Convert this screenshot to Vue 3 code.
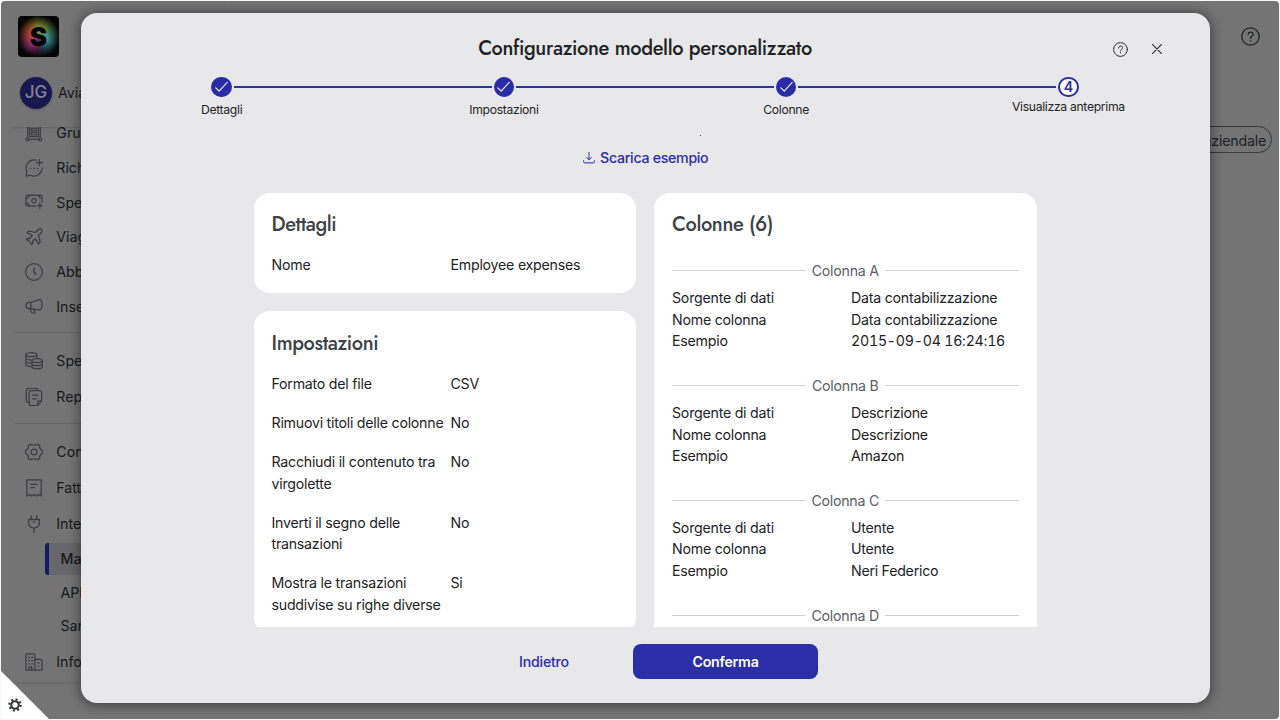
<script setup>
import { ref } from 'vue'

// sidebar icons, drawn on a 20x20 grid
const icons = {
  group: '<path d="M5 1h10v13H5zM7 5h6v2.500H7zM7 9.500h6V12H7zM3 1v14M17 1v14M4.500 17h11"/><circle cx="3" cy="17" r="1.700"/><circle cx="17" cy="17" r="1.700"/>',
  request: '<path d="M12 1.300A9 9 0 0 0 2 13.800L1.200 19l5-1A9 9 0 0 0 19 9.800M16 .500v7M12.500 4h7"/><path d="M6 10.500h.300M10 10.500h.300M14 10.500h.300"/>',
  cash: '<path d="M12 14.500H2.500L1 13V3.500L2.500 2.500h15L19 3.500V10M1 6c2 0 3.500-1 3.500-3.500M19 6c-2 0-3.500-1-3.500-3.500M1 11c2 0 3.500 1 3.500 3.500M16.500 11v6M13.500 14h6"/><circle cx="10" cy="8.500" r="2.400"/>',
  plane: '<path d="M18.400 1.600c-1.500-1-3.200-.200-4.300.900L11.500 5 4.200 3.200 2.300 5.100l5.800 3.300-3.100 3.300-2.300-.300-1.200 1.200 3.500 2.400 2.400 3.500 1.200-1.200-.300-2.300 3.300-3.100 3.300 5.800 1.900-1.900L15 8.500l2.500-2.600c1.100-1.100 1.900-2.800.900-4.300z"/>',
  clock: '<circle cx="10" cy="10" r="9.300"/><path d="M10 5.500V10l2 2.500"/>',
  horn: '<path d="M6.500 6 17 2.500c2.600 2 2.600 9.500 0 12L6.500 13zM6.500 6H3.800C.500 6.500.500 12.500 3.800 13h2.700M5.500 13l2 4.500 3.500.500-1-4"/>',
  coins: '<ellipse cx="7" cy="3" rx="6" ry="2.200"/><path d="M1 3v11c0 1.300 2 2 5 2.200M13 3v3M1 6.700c0 1.200 2 2 5 2.100M1 10.400c0 1.200 2 2 5 2.100"/><ellipse cx="13.500" cy="9.500" rx="5.800" ry="2.200"/><path d="M7.700 9.500v7c0 3 11.600 3 11.600 0v-7M7.700 13c0 3 11.600 3 11.600 0"/>',
  report: '<path d="M4.500 16H3.500a2 2 0 0 1-2-2V2.500a2 2 0 0 1 2-2h9a2 2 0 0 1 2 2"/><path d="M4.500 5a2 2 0 0 1 2-2h10a2 2 0 0 1 2 2v9.500l-4.500 5H6.500a2 2 0 0 1-2-2zM14 19v-4.500h4.500M8.500 8h6M8.500 12h4"/>',
  cog: '<path d="M6 1.500 10 2.500l4-1 2.200 1.300.3 3.200L19.400 8.500v3L16.500 14l-.3 3.200L14 18.500l-4-1-4 1-2.200-1.300L3.500 14 .600 11.500v-3L3.500 6l.3-3.200z"/><circle cx="10" cy="10" r="3.200"/>',
  bill: '<path d="M2 1h16v18l-3-2-2.500 2-2.500-2-2.500 2L5 17l-3 2zM6.500 6h7M6.500 9.500h4"/>',
  plug: '<path d="M7 1v4M13 1v4M4 5h12v4.500c0 3-3 5-6 5s-6-2-6-5zM10 14.500V20M9 8h2"/>',
  building: '<path d="M1 2.500A1.500 1.500 0 0 1 2.500 1h7A1.500 1.500 0 0 1 11 2.500V19H1zM11 7h6.500A1.500 1.500 0 0 1 19 8.500V19h-8M4 5h1M7.500 5h1M4 8.500h1M7.500 8.500h1M4 12h1M7.500 12h1M14.500 11h1M14.500 14.500h1M4.500 19v-3.500h3V19"/>'
}

const menu = ref([
  [
    { icon: 'group', label: 'Gruppi' },
    { icon: 'request', label: 'Richieste' },
    { icon: 'cash', label: 'Spese' },
    { icon: 'plane', label: 'Viaggi' },
    { icon: 'clock', label: 'Abbonamenti' },
    { icon: 'horn', label: 'Inserzioni' }
  ],
  [
    { icon: 'coins', label: 'Spese' },
    { icon: 'report', label: 'Report' }
  ],
  [
    { icon: 'cog', label: 'Controllo' },
    { icon: 'bill', label: 'Fatture' },
    { icon: 'plug', label: 'Integrazioni', children: ['Marketplace', 'API', 'Sandbox'] },
    { icon: 'building', label: 'Informazioni' }
  ]
])

const steps = ['Dettagli', 'Impostazioni', 'Colonne', 'Visualizza anteprima']
const current = 3

const settings = [
  ['Formato del file', 'CSV'],
  ['Rimuovi titoli delle colonne', 'No'],
  ['Racchiudi il contenuto tra virgolette', 'No'],
  ['Inverti il segno delle transazioni', 'No'],
  ['Mostra le transazioni suddivise su righe diverse', 'Si']
]

const columns = [
  { id: 'A', source: 'Data contabilizzazione', example: '2015-09-04 16:24:16' },
  { id: 'B', source: 'Descrizione', example: 'Amazon' },
  { id: 'C', source: 'Utente', example: 'Neri Federico' },
  { id: 'D' }
]
</script>

<template>
  <div class="page">
    <div class="app">
      <aside class="sidebar">
        <div class="brand"><span class="logo">S</span></div>
        <div class="user">
          <span class="avatar">JG</span>
          <span class="company">Aviato</span>
        </div>
        <nav>
          <ul v-for="(group, g) in menu" :key="g" :class="'group-' + g">
            <li v-for="item in group" :key="item.label">
              <div class="item">
                <svg viewBox="0 0 20 20" v-html="icons[item.icon]"></svg>
                <span>{{ item.label }}</span>
              </div>
              <div v-if="item.children" class="children">
                <div v-for="(child, i) in item.children" :key="child" class="child" :class="{ active: i === 0 }">{{ child }}</div>
              </div>
            </li>
          </ul>
        </nav>
      </aside>
      <main>
        <svg class="help-large" viewBox="0 0 20 20">
          <circle cx="10" cy="10" r="9.200" />
          <path d="M7.500 8c0-3.600 5.200-3.500 5.200-.300 0 1.900-2.700 2-2.700 4.300M10 14.300v.400" />
        </svg>
        <button class="pill">Carta aziendale</button>
      </main>
    </div>

    <section class="modal">
      <header>
        <h1>Configurazione modello personalizzato</h1>
        <div class="tools">
          <svg class="help" viewBox="0 0 20 20">
            <circle cx="10" cy="10" r="9.200" />
            <path d="M7.500 8c0-3.600 5.200-3.500 5.200-.300 0 1.900-2.700 2-2.700 4.300M10 14.300v.400" />
          </svg>
          <svg class="close" viewBox="0 0 10 10"><path d="M.400.400l9.200 9.200M9.600.400.400 9.600" /></svg>
        </div>
      </header>

      <ol class="stepper">
        <li v-for="(step, i) in steps" :key="step" :class="{ current: i === current }">
          <span class="dot">
            <svg v-if="i < current" viewBox="0 0 20 20"><path d="M3.300 11.600 7.300 15.400 16.800 5" /></svg>
            <template v-else>{{ i + 1 }}</template>
          </span>
          <span class="step-label">{{ step }}</span>
        </li>
      </ol>

      <div class="content">
        <i class="speck"></i>
        <a class="download">
          <svg viewBox="0 0 12 12"><path d="M6 .500v7.200M3.700 5.500 6 7.800l2.300-2.300M.600 8.700v1.100c0 .700.400 1.100 1.100 1.100h8.600c.700 0 1.100-.400 1.100-1.100V8.700" /></svg>
          Scarica esempio
        </a>
        <div class="cards">
          <div class="stack">
            <article class="card">
              <h2>Dettagli</h2>
              <dl>
                <dt>Nome</dt>
                <dd>Employee expenses</dd>
              </dl>
            </article>
            <article class="card">
              <h2>Impostazioni</h2>
              <dl>
                <template v-for="[name, value] in settings" :key="name">
                  <dt>{{ name }}</dt>
                  <dd>{{ value }}</dd>
                </template>
              </dl>
            </article>
          </div>
          <article class="card">
            <h2>Colonne (6)</h2>
            <div v-for="col in columns" :key="col.id" class="column">
              <h3>Colonna {{ col.id }}</h3>
              <dl v-if="col.source" class="tight">
                <dt>Sorgente di dati</dt>
                <dd>{{ col.source }}</dd>
                <dt>Nome colonna</dt>
                <dd>{{ col.source }}</dd>
                <dt>Esempio</dt>
                <dd class="example">{{ col.example }}</dd>
              </dl>
            </div>
          </article>
        </div>
      </div>

      <footer>
        <button class="back">Indietro</button>
        <button class="confirm">Conferma</button>
      </footer>
    </section>

    <div class="corner">
      <svg viewBox="0 0 16 16">
        <circle cx="8" cy="8" r="4.300" />
        <circle class="teeth" cx="8" cy="8" r="6.500" />
      </svg>
    </div>
  </div>
</template>

<style>
body {
  margin: 0;
  background: #fafafa;
}
</style>

<style scoped>
* {
  box-sizing: border-box;
}
.page {
  position: relative;
  width: 1280px;
  height: 720px;
  padding: 1px;
  overflow: hidden;
  background: #f6f7f7;
  font-family: Inter, sans-serif;
  font-size: 14.2px;
  letter-spacing: -0.24px;
  line-height: 21.3px;
  color: #1d2327;
}
svg {
  fill: none;
  stroke: currentColor;
  stroke-linecap: round;
  stroke-linejoin: round;
  display: block;
  flex: none;
}
ul,
ol,
dl,
dd,
h1,
h2,
h3 {
  margin: 0;
  padding: 0;
  list-style: none;
}
button {
  font: inherit;
  letter-spacing: inherit;
  border: 0;
  background: none;
  padding: 0;
}

/* dimmed app behind the dialog */
.app {
  display: flex;
  height: 718px;
  border-radius: 4px;
  overflow: hidden;
  background: #747474;
}
.sidebar {
  width: 230px;
  height: 681px;
  display: flex;
  flex-direction: column;
  box-shadow: 0 2px 2px rgba(0, 0, 0, 0.08);
  color: #16191c;
  letter-spacing: 0;
}
.brand {
  padding: 15px 17px 0;
}
.logo {
  width: 41px;
  height: 41px;
  display: grid;
  place-items: center;
  border-radius: 4px;
  background:
    radial-gradient(circle at 50% 50%, transparent 30%, #050505 72%),
    conic-gradient(from 0deg, #8a962e, #6c8f3c 35deg, #449070 75deg, #3793a3 120deg, #2a4a60 165deg, #5e2350 185deg, #a8348f 220deg, #b33a48 265deg, #b05e30 315deg, #8a962e);
  color: #000;
  font-size: 26px;
  font-weight: 900;
}
.user {
  display: flex;
  align-items: center;
  gap: 6px;
  height: 70px;
  padding: 2px 0 0 19px;
  flex: none;
}
.avatar {
  width: 32px;
  height: 32px;
  border-radius: 50%;
  display: grid;
  place-items: center;
  background: #16184f;
  color: #858592;
  font-size: 17px;
  font-weight: 500;
  box-shadow: 0 1px 3px rgba(0, 0, 0, 0.2);
}
nav {
  flex: 1;
  overflow: hidden;
  margin-left: 11px;
  padding-left: 3px;
  box-shadow: inset 0 2px 2px -1px rgba(0, 0, 0, 0.15);
}
nav ul {
  padding: 10px 0 8px;
}
nav ul + ul {
  border-top: 1px solid #666;
}
nav .group-0 {
  margin-top: -21.500px;
}
.item {
  display: flex;
  align-items: center;
  gap: 13.300px;
  height: 36px;
  padding-left: 10px;
}
.group-0 .item {
  height: 34.700px;
}
.item svg {
  width: 18px;
  height: 18px;
  stroke-width: 1.400;
  color: #3c3d43;
}
.children {
  padding: 1px 0 0.500px 30px;
}
.child {
  height: 33.700px;
  line-height: 33.700px;
  padding-left: 15.500px;
}
.child.active {
  height: 32px;
  line-height: 32px;
  border-left: 4px solid #171a64;
  border-radius: 3px;
  padding-left: 11.500px;
  background: #67676b;
  margin-bottom: 1px;
  font-weight: 500;
}
main {
  flex: 1;
  display: flex;
  flex-direction: column;
  align-items: flex-end;
  padding: 25.500px 7px 0 0;
  color: #1d2022;
}
.help-large {
  width: 19px;
  height: 19px;
  stroke-width: 1.300;
  margin-right: 12px;
}
.pill {
  margin-top: 80px;
  height: 27.500px;
  padding: 2px 5px 0 14px;
  border: 1px solid #35383a;
  border-radius: 14px;
  font-size: 14.200px;
  letter-spacing: -0.2px;
  color: inherit;
}

/* dialog */
.modal {
  position: absolute;
  left: 80.500px;
  top: 13px;
  width: 1129px;
  height: 689.500px;
  display: flex;
  flex-direction: column;
  border-radius: 16px;
  background: #e8e8ea;
  box-shadow: 0 1px 12px 2px rgba(0, 0, 0, 0.4);
}
.modal > header {
  display: grid;
  grid-template-columns: 1fr auto 1fr;
  align-items: center;
  height: 63.500px;
  padding-top: 9px;
  flex: none;
}
h1,
h2 {
  font-family: Jost, Lato, sans-serif;
  font-weight: 500;
}
h1 {
  grid-column: 2;
  font-size: 20px;
  line-height: 26px;
  letter-spacing: -0.34px;
}
.tools {
  display: flex;
  align-items: center;
  justify-content: flex-end;
  gap: 24px;
  padding-right: 47.500px;
  color: #24292c;
}
.help {
  width: 15px;
  height: 15px;
  stroke-width: 1.300;
}
.close {
  width: 10px;
  height: 10px;
  stroke-width: 1.100;
}
.stepper {
  display: flex;
  height: 58px;
  flex: none;
}
.stepper li {
  position: relative;
  flex: 1;
  display: flex;
  flex-direction: column;
  align-items: center;
}
.stepper li + li::before {
  content: '';
  position: absolute;
  top: 9.500px;
  right: calc(50% + 12px);
  width: calc(100% - 24px);
  height: 2px;
  background: #2d30a6;
}
.dot {
  width: 20.500px;
  height: 20.500px;
  border-radius: 50%;
  display: grid;
  place-items: center;
  background: #2a2ca7;
  color: #fff;
}
.dot svg {
  width: 17px;
  height: 17px;
  stroke-width: 1.300;
}
.current .dot {
  border: 2px solid #2a2ca7;
  background: #fff;
  color: #2a2ca7;
  font-weight: 600;
  line-height: 16px;
}
.step-label {
  margin-top: 4px;
  font-size: 12.200px;
  line-height: 18px;
  letter-spacing: -0.32px;
}
.current .step-label {
  margin-top: 0.500px;
}
.content {
  position: relative;
  height: 492.500px;
  overflow: hidden;
  flex: none;
}
.speck {
  position: absolute;
  left: 619px;
  top: 0.500px;
  width: 1.500px;
  height: 1px;
  background: #4a4f52;
}
.download {
  display: flex;
  align-items: center;
  justify-content: center;
  gap: 5px;
  margin-top: 12.500px;
  padding-left: 1.500px;
  color: #2a2ca7;
  font-weight: 500;
  letter-spacing: -0.3px;
}
.download svg {
  width: 12px;
  height: 12px;
  stroke-width: 1;
}
.cards {
  display: grid;
  grid-template-columns: 382px 382.500px;
  gap: 18.500px;
  justify-content: center;
  align-items: start;
  margin-top: 24.300px;
}
.stack {
  display: grid;
  gap: 18px;
}
.card {
  padding: 18px;
  border-radius: 16px;
  background: #fff;
}
h2 {
  padding-top: 1.700px;
  font-size: 20px;
  line-height: 26px;
  letter-spacing: -0.36px;
  color: #3c4248;
}
.card > dl {
  margin-top: 15.700px;
}
dl {
  display: grid;
  grid-template-columns: 175px 1fr;
  gap: 18px 4px;
}
dl.tight {
  row-gap: 0;
}
.example {
  font-variant-numeric: tabular-nums;
}
.column {
  padding-top: 23.700px;
}
h2 + .column {
  padding-top: 21.800px;
}
h3 {
  display: flex;
  align-items: center;
  gap: 6px;
  margin-bottom: 6px;
  font-size: inherit;
  font-weight: 400;
  color: #5b6064;
}
h3::before,
h3::after {
  content: '';
  flex: 1;
  height: 1px;
  background: #cfd0d2;
}
footer {
  display: flex;
  justify-content: center;
  padding: 17px 17px 0 0;
}
.back {
  width: 178px;
  height: 35px;
  color: #2a2ca7;
  font-weight: 500;
}
.confirm {
  width: 185px;
  height: 35px;
  border-radius: 8px;
  background: #2a2ea7;
  color: #fff;
  font-weight: 600;
}

/* settings handle in the bottom left corner */
.corner {
  position: absolute;
  left: 1px;
  bottom: 1px;
  width: 48px;
  height: 48px;
  display: flex;
  align-items: flex-end;
  padding: 0 0 7px 7px;
  background: #fff;
  clip-path: polygon(0 0, 100% 100%, 0 100%);
  color: #303233;
}
.corner svg {
  width: 14px;
  height: 14px;
  stroke-width: 2.400;
}
.corner .teeth {
  stroke-width: 2.400;
  stroke-linecap: butt;
  stroke-dasharray: 2.200 2.884;
}
</style>
